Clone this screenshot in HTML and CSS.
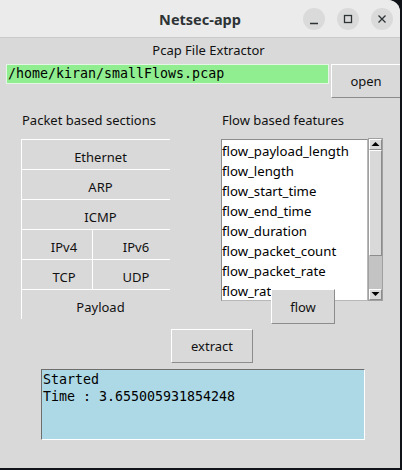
FILE: index.html
```html
<!DOCTYPE html>
<html>
<head>
<meta charset="utf-8">
<link rel="stylesheet" href="styles.css">
</head>
<body>
<div class="win">
  <div class="titlebar">
    <span></span>
    <span class="title">Netsec-app</span>
    <div class="wbtns">
      <span class="wbtn"><svg width="22" height="22" viewBox="0 0 22 22"><path d="M7 15.5h8" stroke="#2e3436" stroke-width="1.3" fill="none"/></svg></span>
      <span class="wbtn"><svg width="22" height="22" viewBox="0 0 22 22"><rect x="7.5" y="7.5" width="7" height="7" stroke="#2e3436" stroke-width="1.3" fill="none"/></svg></span>
      <span class="wbtn"><svg width="22" height="22" viewBox="0 0 22 22"><path d="M7.5 7.5l7 7M14.5 7.5l-7 7" stroke="#2e3436" stroke-width="1.3" fill="none"/></svg></span>
    </div>
  </div>
  <div class="content">
    <div class="heading">Pcap File Extractor</div>
    <div class="filerow">
      <div class="entry">/home/kiran/smallFlows.pcap</div>
      <button class="btn open">open</button>
    </div>
    <div class="cols">
      <div class="col left">
        <div class="sec-label">Packet based sections</div>
        <div class="grid">
          <div class="cell wide">Ethernet</div>
          <div class="cell wide">ARP</div>
          <div class="cell wide">ICMP</div>
          <div class="cell first">IPv4</div>
          <div class="cell second">IPv6</div>
          <div class="cell first">TCP</div>
          <div class="cell second">UDP</div>
          <div class="cell wide">Payload</div>
        </div>
      </div>
      <div class="col right">
        <div class="sec-label">Flow based features</div>
        <div class="listwrap">
          <div class="listbox">
            <div class="item">flow_payload_length</div>
            <div class="item">flow_length</div>
            <div class="item">flow_start_time</div>
            <div class="item">flow_end_time</div>
            <div class="item">flow_duration</div>
            <div class="item">flow_packet_count</div>
            <div class="item">flow_packet_rate</div>
            <div class="item">flow_rate</div>
          </div>
          <div class="scrollbar">
            <div class="arrow"><svg width="13" height="10" viewBox="0 0 13 10"><path d="M2.5 7h8L6.5 3z" fill="#000"/></svg></div>
            <div class="slider"></div>
            <div class="trough"></div>
            <div class="arrow"><svg width="13" height="10" viewBox="0 0 13 10"><path d="M2.5 3h8L6.5 7z" fill="#000"/></svg></div>
          </div>
          <button class="btn flow">flow</button>
        </div>
      </div>
    </div>
    <div class="extract-row"><button class="btn extract">extract</button></div>
    <div class="output">Started<br>Time : 3.655005931854248</div>
  </div>
</div>
</body>
</html>
```
FILE: styles.css
```css
html, body {
  margin: 0;
  padding: 0;
  background: #101419;
  width: 402px;
  height: 470px;
  overflow: hidden;
}
.win {
  width: 400px;
  height: 468px;
  overflow: hidden;
  border-top-right-radius: 12px;
  background: #d9d9d9;
  font-family: "Noto Sans", "Open Sans", sans-serif;
  font-size: 13px;
  color: #111;
}
.titlebar {
  height: 37px;
  border-bottom: 1px solid #cacaca;
  background: #ebebeb;
  display: grid;
  grid-template-columns: 1fr auto 1fr;
  align-items: center;
}
.title {
  font-weight: bold;
  font-size: 14.5px;
  color: #2e3436;
}
.wbtns {
  display: flex;
  justify-content: flex-end;
  gap: 12px;
  padding-right: 7px;
}
.wbtn {
  width: 22px;
  height: 22px;
  border-radius: 50%;
  background: #dadada;
  display: block;
}
.wbtn svg { display: block; }
.content {
  height: 430px;
}
.heading {
  height: 26px;
  line-height: 24px;
  text-align: center;
  padding-left: 17px;
}
.filerow {
  display: flex;
  height: 34px;
  padding-left: 6px;
}
.entry {
  box-sizing: border-box;
  flex: none;
  width: 323px;
  height: 20px;
  background: #90ee90;
  border: 1px solid #e6f6e6;
  font-family: "DejaVu Sans Mono", monospace;
  font-size: 13.3px;
  line-height: 18px;
  padding-left: 1px;
  color: #000;
  white-space: nowrap;
}
.btn {
  box-sizing: border-box;
  background: #d9d9d9;
  border: 1px solid;
  border-color: #ffffff #8c8c8c #8c8c8c #ffffff;
  font-family: "Noto Sans", "Open Sans", sans-serif;
  font-size: 13px;
  color: #111;
  padding: 0;
  margin: 0;
}
.open {
  margin-left: 2px;
  width: 70px;
  height: 34px;
  flex: none;
}
.cols {
  display: flex;
  margin-top: 13px;
  height: 208px;
}
.left {
  margin-left: 21px;
  width: 149px;
}
.sec-label {
  height: 28px;
  line-height: 18px;
  padding-left: 1px;
  white-space: nowrap;
}
.grid {
  display: grid;
  grid-template-columns: 71px 78px;
  grid-auto-rows: 30px;
}
.cell {
  box-sizing: border-box;
  border-top: 1px solid #fff;
  border-left: 1px solid #fff;
  padding-top: 8px;
  line-height: 18px;
  text-align: center;
  white-space: nowrap;
}
.cell.wide { grid-column: span 2; padding-left: 9px; }
.cell.first { padding-left: 14px; }
.cell.second { padding-left: 9px; }
.right {
  margin-left: 51px;
}
.listwrap {
  position: relative;
  display: flex;
}
.listbox {
  box-sizing: border-box;
  width: 147px;
  height: 162px;
  padding-top: 1px;
  background: #fff;
  border: 1px solid;
  border-color: #8c8c8c #b8b8b8 #b8b8b8 #8c8c8c;
  overflow: hidden;
  font-size: 13.2px;
  color: #000;
}
.item {
  height: 20px;
  line-height: 20px;
  white-space: nowrap;
}
.scrollbar {
  box-sizing: border-box;
  width: 15px;
  height: 163px;
  margin-top: -1px;
  border: 1px solid #a0a0a0;
  background: #c3c3c3;
  display: flex;
  flex-direction: column;
}
.arrow {
  box-sizing: border-box;
  height: 11px;
  background: #d9d9d9;
  border: 1px solid;
  border-color: #fff #8c8c8c #8c8c8c #fff;
  flex: none;
}
.arrow svg { display: block; margin: -1px 0 0 -1px; }
.slider {
  box-sizing: border-box;
  height: 106px;
  background: #d9d9d9;
  border: 1px solid;
  border-color: #fff #8c8c8c #8c8c8c #fff;
  flex: none;
}
.trough { flex: 1; }
.flow {
  position: absolute;
  left: 50px;
  top: 150px;
  width: 64px;
  height: 35px;
}
.extract-row {
  padding-top: 10px;
  padding-left: 171px;
  height: 34px;
}
.extract {
  width: 82px;
  height: 34px;
}
.output {
  box-sizing: border-box;
  margin-top: 6px;
  margin-left: 41px;
  width: 324px;
  height: 71px;
  background: #add8e6;
  border: 1px solid;
  border-color: #6e6e6e #ffffff #ffffff #6e6e6e;
  font-family: "DejaVu Sans Mono", monospace;
  font-size: 13.3px;
  line-height: 17px;
  padding: 1px 0 0 1px;
  color: #000;
}
```
